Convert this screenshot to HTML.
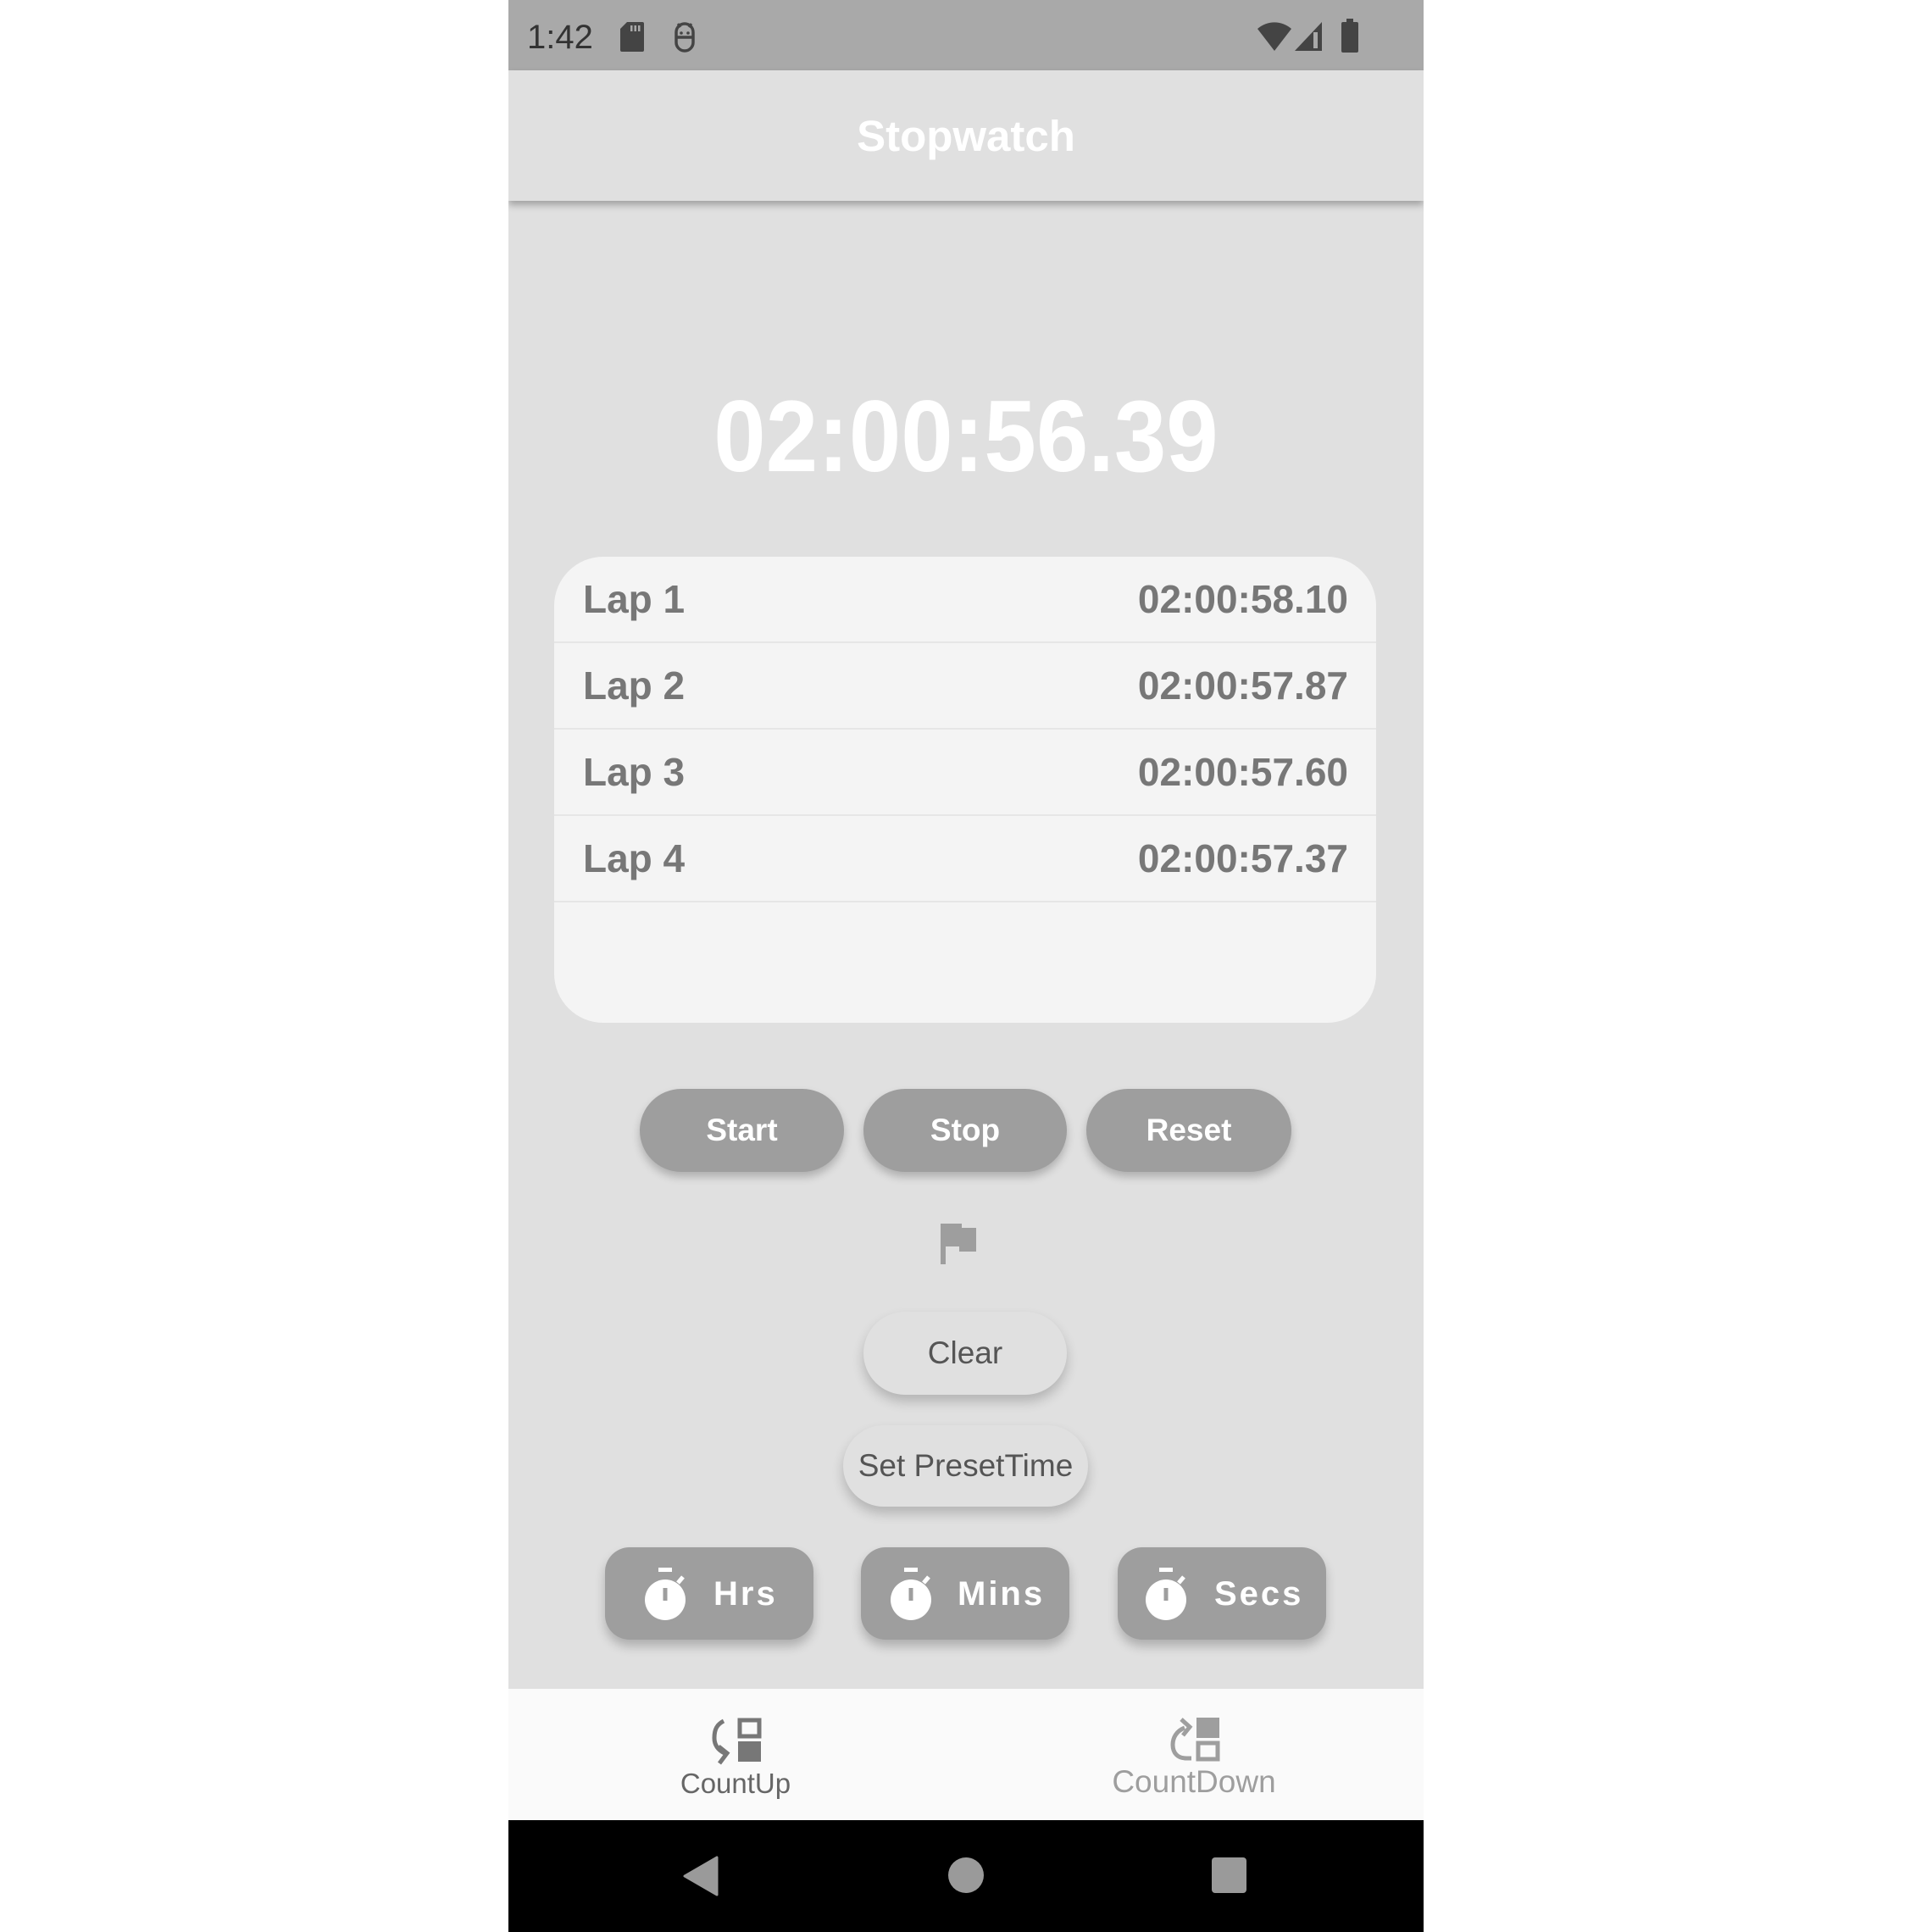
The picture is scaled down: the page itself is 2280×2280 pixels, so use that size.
<!DOCTYPE html>
<html><head><meta charset="utf-8">
<style>
*{margin:0;padding:0;box-sizing:border-box}
html,body{width:2280px;height:2280px;background:#fff;overflow:hidden;font-family:"Liberation Sans",sans-serif}
#ph{position:absolute;left:600px;top:0;width:1080px;height:2280px;background:#e0e0e0;overflow:hidden}
.abs{position:absolute}
.c{display:flex;align-items:center;justify-content:center}
.btn{position:absolute;border-radius:60px;background:#9e9e9e;color:#fff;font-size:37px;font-weight:bold;box-shadow:0 6px 10px rgba(0,0,0,.22)}
.btn2{background:#e0e0e0;color:#555;font-weight:normal;box-shadow:0 8px 14px rgba(0,0,0,.2)}
.row{position:absolute;left:0;width:970px;height:102px;border-bottom:2px solid #e6e6e6;color:#777;font-weight:bold;font-size:46px}
.row span{position:absolute;top:50%;transform:translateY(-50%)}
.sq{position:absolute;border-radius:29px;background:#9e9e9e;box-shadow:0 8px 12px rgba(0,0,0,.22);color:#fff;font-size:40px;font-weight:bold;letter-spacing:3px}
</style></head><body>
<div id="ph">
 <div class="abs" style="left:0;top:0;width:1080px;height:83px;background:#a9a9a9"></div>
 <div class="abs" style="left:22px;top:20px;font-size:40px;color:#333;line-height:48px">1:42</div>
 <svg class="abs" style="left:130px;top:24px" width="32" height="38" viewBox="0 0 32 38"><path d="M10 2h18a2 2 0 0 1 2 2v31a2 2 0 0 1-2 2H4a2 2 0 0 1-2-2V10z" fill="#444"/><rect x="14" y="6" width="2.5" height="7" fill="#a9a9a9"/><rect x="18.5" y="6" width="2.5" height="7" fill="#a9a9a9"/><rect x="23" y="6" width="2.5" height="7" fill="#a9a9a9"/></svg>
 <svg class="abs" style="left:193px;top:24px" width="30" height="38" viewBox="0 0 30 38"><path d="M5 14a10 10 0 0 1 20 0v12a10 10 0 0 1-20 0z M5 20h20" fill="none" stroke="#444" stroke-width="3.5"/><path d="M7 4l3 4M23 4l-3 4" stroke="#444" stroke-width="3"/><circle cx="11" cy="15" r="1.8" fill="#444"/><circle cx="19" cy="15" r="1.8" fill="#444"/></svg>
 <svg class="abs" style="left:882px;top:24px" width="44" height="38" viewBox="0 0 44 38"><path d="M2 10a30 30 0 0 1 40 0L22 36z" fill="#444"/></svg>
 <svg class="abs" style="left:926px;top:24px" width="36" height="38" viewBox="0 0 36 38"><path d="M34 2v34H2z" fill="#444"/><rect x="24" y="14" width="5" height="19" fill="#a9a9a9"/></svg>
 <svg class="abs" style="left:982px;top:22px" width="22" height="40" viewBox="0 0 22 40"><rect x="7" y="0" width="8" height="5" fill="#444"/><rect x="1" y="4" width="20" height="36" rx="2" fill="#444"/></svg>
 <div class="abs c" style="left:0;top:83px;width:1080px;height:154px;background:#e0e0e0;box-shadow:0 5px 8px rgba(0,0,0,.28);color:#fff;font-size:51px;font-weight:bold">Stopwatch</div>
 <div class="abs c" style="left:0;top:440px;width:1080px;height:150px;color:#fff;font-size:120px;font-weight:bold;transform:scaleX(0.92)">02:00:56.39</div>
 <div class="abs" style="left:54px;top:657px;width:970px;height:550px;background:#f4f4f4;border-radius:58px;overflow:hidden">
  <div class="row" style="top:0"><span style="left:34px">Lap 1</span><span style="right:33px">02:00:58.10</span></div>
  <div class="row" style="top:102px"><span style="left:34px">Lap 2</span><span style="right:33px">02:00:57.87</span></div>
  <div class="row" style="top:204px"><span style="left:34px">Lap 3</span><span style="right:33px">02:00:57.60</span></div>
  <div class="row" style="top:306px"><span style="left:34px">Lap 4</span><span style="right:33px">02:00:57.37</span></div>
 </div>
 <div class="btn c" style="left:155px;top:1285px;width:241px;height:98px">Start</div>
 <div class="btn c" style="left:419px;top:1285px;width:240px;height:98px">Stop</div>
 <div class="btn c" style="left:682px;top:1285px;width:242px;height:98px">Reset</div>
 <svg class="abs" style="left:510px;top:1444px" width="42" height="48" viewBox="0 0 42 48"><path d="M0 0h25v5h17v28H22v-6H6v21H0z" fill="#9e9e9e"/></svg>
 <div class="btn btn2 c" style="left:419px;top:1548px;width:240px;height:98px">Clear</div>
 <div class="btn btn2 c" style="left:395px;top:1682px;width:289px;height:96px">Set PresetTime</div>
 <div class="sq" style="left:114px;top:1826px;width:246px;height:109px">
  <svg class="abs" style="left:46px;top:24px" width="54" height="62" viewBox="0 0 54 62"><rect x="17" y="0" width="16" height="5" fill="#fff"/><circle cx="25" cy="38" r="24" fill="#fff"/><path d="M40 18l6-7" stroke="#fff" stroke-width="5"/><rect x="22.5" y="24" width="5" height="15" fill="#9e9e9e"/></svg>
  <span class="abs" style="left:128px;top:33px">Hrs</span></div>
 <div class="sq" style="left:416px;top:1826px;width:246px;height:109px">
  <svg class="abs" style="left:34px;top:24px" width="54" height="62" viewBox="0 0 54 62"><rect x="17" y="0" width="16" height="5" fill="#fff"/><circle cx="25" cy="38" r="24" fill="#fff"/><path d="M40 18l6-7" stroke="#fff" stroke-width="5"/><rect x="22.5" y="24" width="5" height="15" fill="#9e9e9e"/></svg>
  <span class="abs" style="left:114px;top:33px">Mins</span></div>
 <div class="sq" style="left:719px;top:1826px;width:246px;height:109px">
  <svg class="abs" style="left:32px;top:24px" width="54" height="62" viewBox="0 0 54 62"><rect x="17" y="0" width="16" height="5" fill="#fff"/><circle cx="25" cy="38" r="24" fill="#fff"/><path d="M40 18l6-7" stroke="#fff" stroke-width="5"/><rect x="22.5" y="24" width="5" height="15" fill="#9e9e9e"/></svg>
  <span class="abs" style="left:114px;top:33px">Secs</span></div>
 <div class="abs" style="left:0;top:1993px;width:1080px;height:155px;background:#fafafa"></div>
 <svg class="abs" style="left:240px;top:2027px" width="60" height="56" viewBox="0 0 60 56"><path d="M14 4C6 8 3 14 3 24c0 8 4 14 12 18" fill="none" stroke="#777" stroke-width="5"/><path d="M8 34l10 8-9 12" fill="none" stroke="#777" stroke-width="5"/><rect x="33" y="3" width="23" height="19" fill="none" stroke="#777" stroke-width="5"/><rect x="31" y="28" width="27" height="24" fill="#777"/></svg>
 <div class="abs" style="left:168px;top:2086px;width:200px;text-align:center;font-size:33px;color:#666">CountUp</div>
 <svg class="abs" style="left:780px;top:2025px" width="60" height="56" viewBox="0 0 60 56"><path d="M18 14c-10 4-14 12-14 20 0 10 6 16 16 16h6" fill="none" stroke="#9e9e9e" stroke-width="5"/><path d="M14 4l10 9-8 10" fill="none" stroke="#9e9e9e" stroke-width="5"/><rect x="32" y="2" width="27" height="24" fill="#9e9e9e"/><rect x="34" y="32" width="23" height="19" fill="none" stroke="#9e9e9e" stroke-width="5"/></svg>
 <div class="abs" style="left:659px;top:2082px;width:300px;text-align:center;font-size:37px;color:#9e9e9e">CountDown</div>
 <div class="abs" style="left:0;top:2148px;width:1080px;height:132px;background:#000"></div>
 <svg class="abs" style="left:206px;top:2190px" width="42" height="48" viewBox="0 0 42 48"><path d="M40 2v44L2 24z" fill="#9a9a9a" stroke="#9a9a9a" stroke-width="3" stroke-linejoin="round"/></svg>
 <div class="abs" style="left:519px;top:2192px;width:42px;height:42px;border-radius:50%;background:#9a9a9a"></div>
 <div class="abs" style="left:830px;top:2192px;width:41px;height:42px;border-radius:4px;background:#9a9a9a"></div>
</div>
</body></html>
